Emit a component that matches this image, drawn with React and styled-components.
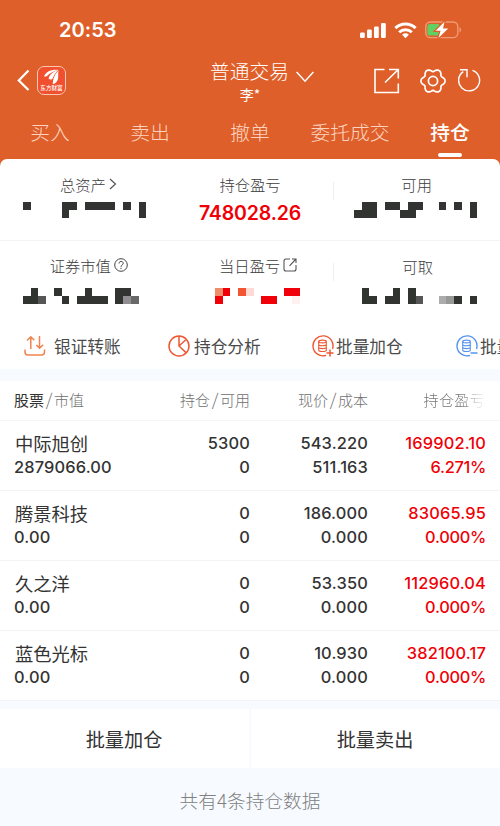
import React from "react";
import styled, { createGlobalStyle, css } from "styled-components";

const cjk = '"Noto Sans CJK SC", sans-serif';
const num = 'Inter, "Noto Sans CJK SC", sans-serif';

const GlobalStyle = createGlobalStyle`
  *, *::before, *::after { box-sizing: border-box; }
  body { margin: 0; background: #f7faff; overflow: hidden; }
`;

const Screen = styled.div`
  width: 500px;
  height: 826px;
  overflow: hidden;
  display: flex;
  flex-direction: column;
  background: #f7faff;
  font-family: ${cjk};
  color: #333;
  white-space: nowrap;
`;

const Header = styled.header`
  background: #df5f2a;
  color: #fff;
  height: 168px;
  flex: none;
`;

const StatusBar = styled.div`
  height: 60px;
  display: flex;
  justify-content: space-between;
  align-items: center;
  padding: 0 38px 0 59px;
`;

const Clock = styled.span`
  font: 600 20px/24px ${num};
  letter-spacing: 0.05px;
`;

const StatusIcons = styled.div`
  display: flex;
  align-items: center;
  gap: 8px;
  svg { display: block; }
`;

const NavBar = styled.div`
  height: 51px;
  display: grid;
  grid-template-columns: 1fr 120px 1fr;
  svg { display: block; }
`;

const NavLeft = styled.div`
  display: flex;
  align-items: center;
  gap: 6px;
  height: 40px;
  padding-left: 17px;
`;

const NavRight = styled.div`
  display: flex;
  align-items: center;
  justify-content: flex-end;
  height: 40px;
  padding: 1px 18px 0 0;
`;

const IconSlot = styled.span`
  margin-left: ${(p) => p.$gap}px;
`;

const Title = styled.div`
  display: grid;
  grid-template-columns: 80px 18px;
  justify-content: start;
  column-gap: 6px;
  padding-left: 20px;
  height: 22px;
  font-size: 19.8px;
  font-weight: 300;
  line-height: 21px;
  svg { margin-top: 11px; }
`;

const Account = styled.div`
  font-size: 14px;
  line-height: 20px;
  margin-top: 2px;
  text-align: center;
`;

const Tabs = styled.nav`
  display: grid;
  grid-template-columns: repeat(5, 1fr);
  height: 47px;
`;

const Tab = styled.span`
  display: flex;
  flex-direction: column;
  align-items: center;
  padding-top: 8px;
  font-size: 19.8px;
  line-height: 26px;
  color: ${(p) => (p.$active ? "#fff" : "rgba(255, 226, 214, 0.9)")};
  font-weight: ${(p) => (p.$active ? 500 : 300)};
  ${(p) =>
    p.$active &&
    css`
      &::after {
        content: "";
        width: 24px;
        height: 4px;
        margin-top: 8px;
        border-radius: 2px;
        background: #fff;
      }
    `}
`;

const Card = styled.section`
  flex: none;
  height: 210px;
  margin-top: -9px;
  background: #fff;
  border-radius: 7px 7px 0 0;
  overflow: hidden;
`;

const SummaryRow = styled.div`
  display: grid;
  grid-template-columns: repeat(3, 1fr);
  height: ${(p) => p.$height}px;
  ${(p) => p.$line && "border-bottom: 1px solid #f4f4f4;"}
`;

const Metric = styled.div`
  display: flex;
  flex-direction: column;
  align-items: center;
  padding-top: ${(p) => p.$top}px;
  svg { display: block; }
`;

const DividedMetric = styled(Metric)`
  background: linear-gradient(#eee, #eee) left ${(p) => p.$rule}px / 1px 18px no-repeat;
`;

const Label = styled.div`
  display: flex;
  align-items: center;
  gap: 3px;
  height: 20px;
  margin-left: ${(p) => p.$nudge || 0}px;
  font-size: 15.3px;
  line-height: 20px;
  font-weight: 300;
  color: #3c3c3c;
`;

const Profit = styled.div`
  font: 600 19.5px/24px ${num};
  letter-spacing: -0.15px;
  color: #f00006;
  margin-top: 7px;
`;

const MaskBox = styled.div`
  margin: ${(p) => p.$top}px 0 0 ${(p) => p.$nudge || 0}px;
`;

const Actions = styled.div`
  display: flex;
  height: 50px;
  padding: 3px 0 0 24px;
  align-items: center;
`;

const Action = styled.div`
  flex: 0 0 144px;
  display: flex;
  align-items: center;
  gap: ${(p) => p.$gap}px;
  font-size: 16.7px;
  line-height: 24px;
  color: #4a4a4a;
  svg { flex: none; display: block; }
`;

const Table = styled.section`
  flex: none;
  margin-top: 12px;
  background: #fff;
`;

const Line = styled.div`
  display: grid;
  grid-template-columns: 132px 104px 118px 118px;
  padding: 0 14px;
`;

const HeadRow = styled(Line)`
  height: 40px;
  border-bottom: 1px solid #f5f5f6;
  font-size: 15px;
  line-height: 38px;
  font-weight: 300;
  color: #707070;
`;

const HeadCell = styled.span`
  text-align: ${(p) => (p.$left ? "left" : "right")};
  b { font-weight: 400; color: #333; }
  i { font-style: normal; display: inline-block; width: 10px; text-align: center; font-size: 17px; line-height: 20px; }
`;

const FadingHead = styled(HeadCell)`
  background: linear-gradient(90deg, #707070 78%, #fff 100%);
  background-clip: text;
  -webkit-background-clip: text;
  color: transparent;
  padding-right: 1px;
  letter-spacing: 0.35px;
`;

const StockRow = styled(Line)`
  height: 70px;
  padding-top: 10px;
  border-bottom: 1px solid #f5f2f3;
`;

const Cell = styled.div`
  display: flex;
  flex-direction: column;
  align-items: ${(p) => (p.$left ? "flex-start" : "flex-end")};
  font: 500 16.4px/24px ${num};
  letter-spacing: 0.15px;
  color: ${(p) => (p.$up ? "#f00006" : "#333")};
`;

const Rate = styled.span`
  letter-spacing: -0.3px;
`;

const StockName = styled.span`
  font: 400 18.3px/24px ${cjk};
  letter-spacing: 0;
  padding-left: 1px;
`;

const Buttons = styled.div`
  flex: none;
  display: grid;
  grid-template-columns: 249px 249px;
  gap: 2px;
  margin-top: 8px;
  height: 59px;
`;

const BulkButton = styled.button`
  border: 0;
  background: #fff;
  font: 400 19.2px/28px ${cjk};
  color: #333;
  padding: 0 1px 0 0;
`;

const Footer = styled.footer`
  padding-top: 18px;
  text-align: center;
  font-size: 18.7px;
  line-height: 28px;
  font-weight: 300;
  color: #808080;
`;

const Signal = () => (
  <svg width="26" height="17" fill="#fff">
    <rect x="0" y="10.5" width="4.8" height="5.5" rx="1.3" />
    <rect x="7" y="7.5" width="4.8" height="8.5" rx="1.3" />
    <rect x="14" y="4.5" width="4.8" height="11.5" rx="1.3" />
    <rect x="21" y="1" width="4.8" height="15" rx="1.3" />
  </svg>
);

const Wifi = () => (
  <svg width="23" height="17" viewBox="0 0 23 17" fill="none" stroke="#fff" strokeWidth="3">
    <path d="M1.4 6.1a14.4 14.4 0 0 1 20.2 0" />
    <path d="M5.2 10.2a9 9 0 0 1 12.6 0" />
    <path d="M11.5 16.2l-3.4-3.5a4.9 4.9 0 0 1 6.8 0z" fill="#fff" stroke="none" />
  </svg>
);

const Battery = () => (
  <svg width="37" height="18" viewBox="0 0 37 18">
    <rect x="0.8" y="1" width="32" height="15.6" rx="4.6" fill="none" stroke="#ee9b78" strokeWidth="1.4" />
    <path d="M34.5 6.2c2.2 1 2.2 4.2 0 5.2z" fill="#ee9b78" />
    <path d="M5 3h9v11.6H5a2.6 2.6 0 0 1-2.6-2.6V5.6A2.6 2.6 0 0 1 5 3z" fill="#62cf62" />
    <path d="M19.5 .8L10.6 9.7h5L13.5 17l9.7-9.4h-5.2z" fill="#fff" stroke="#df5f2a" strokeWidth="2.4" paintOrder="stroke" />
  </svg>
);

const Back = () => (
  <svg width="14" height="22" fill="none" stroke="#fff" strokeWidth="2.2">
    <path d="M11.5 1.5L1.8 11.5l9.7 9.5" />
  </svg>
);

const LogoBox = styled.span`
  width: 29px;
  height: 29px;
  border: 1px solid #f8c8b5;
  border-radius: 7px;
  background: #f0502d;
  display: flex;
  flex-direction: column;
  align-items: center;
  padding-top: 2px;
  overflow: hidden;
`;

const LogoText = styled.span`
  font: 500 5.6px/7px ${cjk};
  color: #fff;
`;

const Logo = () => (
  <LogoBox>
    <svg width="17" height="16" viewBox="0 0 17 16" fill="#fff">
      <path d="M1 7.5C2.8 2.8 7.5.3 15.5.8 11 2 7 4.2 4.3 6.7 3.2 7.5 2 7.8 1 7.5z" />
      <path d="M5.5 9.5C7 5.5 10 2.4 15.5 1.1c-2.8 2.3-4.5 4.8-5.6 7.8-1 1.8-2.8 2.2-4.4.6z" />
      <path d="M9.8 15.3C10 9.5 11.5 5 15.6 1.4c-.8 3.2 0 5.4-.5 8.3-.6 2.7-2.6 4.5-5.3 5.6z" />
    </svg>
    <LogoText>东方财富</LogoText>
  </LogoBox>
);

const ChevronDown = () => (
  <svg width="18" height="12" fill="none" stroke="#fff" strokeWidth="1.5">
    <path d="M.6 1l8.4 9.2L17.4 1" />
  </svg>
);

const Share = () => (
  <svg width="26" height="26" fill="none" stroke="#fff" strokeWidth="1.6">
    <path d="M10.5 1.5H1V24.5H24.3V15.5M15 1.5H24.3V10.5M24 1.8L11 14.5" />
  </svg>
);

// Outline of a gear with six rounded teeth.
const gearPoints = Array.from({ length: 73 }, (_, i) => {
  const a = (i * Math.PI) / 36;
  const r = 10.9 + 1.3 * Math.cos(6 * a) - 0.15 * Math.cos(12 * a);
  return `${(13 + r * Math.cos(a)).toFixed(2)} ${(13 + r * Math.sin(a)).toFixed(2)}`;
}).join("L");

const Gear = () => (
  <svg width="27" height="26" fill="none" stroke="#fff" strokeWidth="1.7">
    <path d={`M${gearPoints}z`} />
    <circle cx="13" cy="13" r="4.6" />
  </svg>
);

const Refresh = () => (
  <svg width="24" height="25" fill="none" stroke="#fff" strokeWidth="1.4">
    <path d="M14.5 2.4a10.5 10.5 0 1 1-9.2 1.2M2 1.7h7v7.5" />
  </svg>
);

const ChevronRight = () => (
  <svg width="8" height="12" fill="none" stroke="#555" strokeWidth="1.2">
    <path d="M1 1l5.5 5L1 11" />
  </svg>
);

const Help = () => (
  <svg width="14" height="14" fill="none" stroke="#444" strokeWidth="1">
    <circle cx="7" cy="7" r="6.3" />
    <path d="M5 5.5c0-2.8 4.2-2.7 4.2-.2C9.2 7 7 6.9 7 8.8M7 9.8v1.3" />
  </svg>
);

const OpenLink = () => (
  <svg width="14" height="14" fill="none" stroke="#555" strokeWidth="1.1">
    <path d="M7 1H3a2 2 0 0 0-2 2v8a2 2 0 0 0 2 2h8a2 2 0 0 0 2-2V7M9 1h4v4M13 1L6.5 7.8" />
  </svg>
);

const Transfer = () => (
  <svg width="22" height="22" fill="none" stroke="#ef8450" strokeWidth="1.5">
    <path d="M6.8 14V2M3 5.5L6.8 1.7l3.5 3.5M15.5 1v12M12.3 10l3.3 3.3 3.5-3.5M1 14.5V17a3 3 0 0 0 3 3h13.5a3 3 0 0 0 3-3v-2.5" />
  </svg>
);

const Pie = () => (
  <svg width="22" height="22" fill="none" stroke="#ee5734" strokeWidth="1.5">
    <circle cx="11" cy="11" r="10" />
    <path d="M11 1v10l7.2 6.9M11 11l6.8-6.3" />
  </svg>
);

const Coins = ({ color, plus }) => (
  <svg width="22" height="22" fill="none" stroke={color} strokeWidth="1.1">
    <path d="M20.5 14A10 10 0 1 0 14 20.4" strokeWidth="1.4" />
    <ellipse cx="10.5" cy="6.5" rx="3.8" ry="1.4" />
    <path d="M6.7 6.5v8.7c0 1.8 7.6 1.8 7.6 0V6.5M6.7 9.4c0 1.7 7.6 1.7 7.6 0M6.7 12.3c0 1.7 7.6 1.7 7.6 0" />
    <path d={plus ? "M14.5 18h7M18 14.5v7" : "M14.5 18h7"} strokeWidth="1.5" />
  </svg>
);

const palette = {
  "#": "#323432", g: "#555655", m: "#918e92", n: "#676867", l: "#acacac",
  k: "#999899", r: "#f00009", o: "#f08d69", e: "#f15532", p: "#ffdad5", q: "#fff1f1",
};

const Mosaic = ({ rows }) => (
  <svg width={rows[0].length * 7.7} height="15.6" shapeRendering="crispEdges">
    {rows.map((row, y) =>
      [...row].map((c, x) =>
        c === "." ? null : (
          <rect key={`${x}-${y}`} x={x * 7.7} y={y * 7.8} width="7.7" height="7.8" fill={palette[c]} />
        )
      )
    )}
  </svg>
);

const masks = {
  total: ["#....##.####.#.#", ".....#.........#"],
  available: [".##.##.##..#.#.#", "###...##.......#"],
  market: [".#..#...#...##..", "##g..#.####.#mn."],
  today: ["or.ep....rr", "r.....rr..q"],
  cash: [".#...#.#........", ".##.##.#g..lk#.#"],
};

const stocks = [
  ["中际旭创", "2879066.00", "5300", "0", "543.220", "511.163", "169902.10", "6.271%"],
  ["腾景科技", "0.00", "0", "0", "186.000", "0.000", "83065.95", "0.000%"],
  ["久之洋", "0.00", "0", "0", "53.350", "0.000", "112960.04", "0.000%"],
  ["蓝色光标", "0.00", "0", "0", "10.930", "0.000", "382100.17", "0.000%"],
];

export default function App() {
  return (
    <Screen>
      <GlobalStyle />
      <Header>
        <StatusBar>
          <Clock>20:53</Clock>
          <StatusIcons><Signal /><Wifi /><Battery /></StatusIcons>
        </StatusBar>
        <NavBar>
          <NavLeft><Back /><Logo /></NavLeft>
          <div>
            <Title>普通交易<ChevronDown /></Title>
            <Account>李*</Account>
          </div>
          <NavRight>
            <IconSlot $gap={0}><Share /></IconSlot>
            <IconSlot $gap={20}><Gear /></IconSlot>
            <IconSlot $gap={11}><Refresh /></IconSlot>
          </NavRight>
        </NavBar>
        <Tabs>
          {["买入", "卖出", "撤单", "委托成交", "持仓"].map((t) => (
            <Tab key={t} $active={t === "持仓"}>{t}</Tab>
          ))}
        </Tabs>
      </Header>

      <Card>
        <SummaryRow $height={82} $line>
          <Metric $top={15}>
            <Label $nudge={10}>总资产<ChevronRight /></Label>
            <MaskBox $top={8} $nudge={2}><Mosaic rows={masks.total} /></MaskBox>
          </Metric>
          <Metric $top={15}>
            <Label>持仓盈亏</Label>
            <Profit>748028.26</Profit>
          </Metric>
          <DividedMetric $top={15} $rule={23}>
            <Label>可用</Label>
            <MaskBox $top={8} $nudge={-2}><Mosaic rows={masks.available} /></MaskBox>
          </DividedMetric>
        </SummaryRow>
        <SummaryRow $height={78}>
          <Metric $top={14}>
            <Label $nudge={11}>证券市值<Help /></Label>
            <MaskBox $top={13} $nudge={2}><Mosaic rows={masks.market} /></MaskBox>
          </Metric>
          <Metric $top={14}>
            <Label $nudge={16}>当日盈亏<OpenLink /></Label>
            <MaskBox $top={13} $nudge={15}><Mosaic rows={masks.today} /></MaskBox>
          </Metric>
          <DividedMetric $top={15} $rule={22}>
            <Label $nudge={2}>可取</Label>
            <MaskBox $top={12} $nudge={-2}><Mosaic rows={masks.cash} /></MaskBox>
          </DividedMetric>
        </SummaryRow>
        <Actions>
          <Action $gap={8}><Transfer />银证转账</Action>
          <Action $gap={4}><Pie />持仓分析</Action>
          <Action $gap={2}><Coins color="#ee5734" plus />批量加仓</Action>
          <Action $gap={2}><Coins color="#5594ec" />批量卖出</Action>
        </Actions>
      </Card>

      <Table>
        <HeadRow>
          <HeadCell $left><b>股票</b><i>/</i>市值</HeadCell>
          <HeadCell>持仓<i>/</i>可用</HeadCell>
          <HeadCell>现价<i>/</i>成本</HeadCell>
          <FadingHead>持仓盈亏</FadingHead>
        </HeadRow>
        {stocks.map(([name, value, held, usable, price, cost, gain, rate]) => (
          <StockRow key={name}>
            <Cell $left><StockName>{name}</StockName><span>{value}</span></Cell>
            <Cell><span>{held}</span><span>{usable}</span></Cell>
            <Cell><span>{price}</span><span>{cost}</span></Cell>
            <Cell $up><span>{gain}</span><Rate>{rate}</Rate></Cell>
          </StockRow>
        ))}
      </Table>

      <Buttons>
        <BulkButton>批量加仓</BulkButton>
        <BulkButton>批量卖出</BulkButton>
      </Buttons>
      <Footer>共有4条持仓数据</Footer>
    </Screen>
  );
}
